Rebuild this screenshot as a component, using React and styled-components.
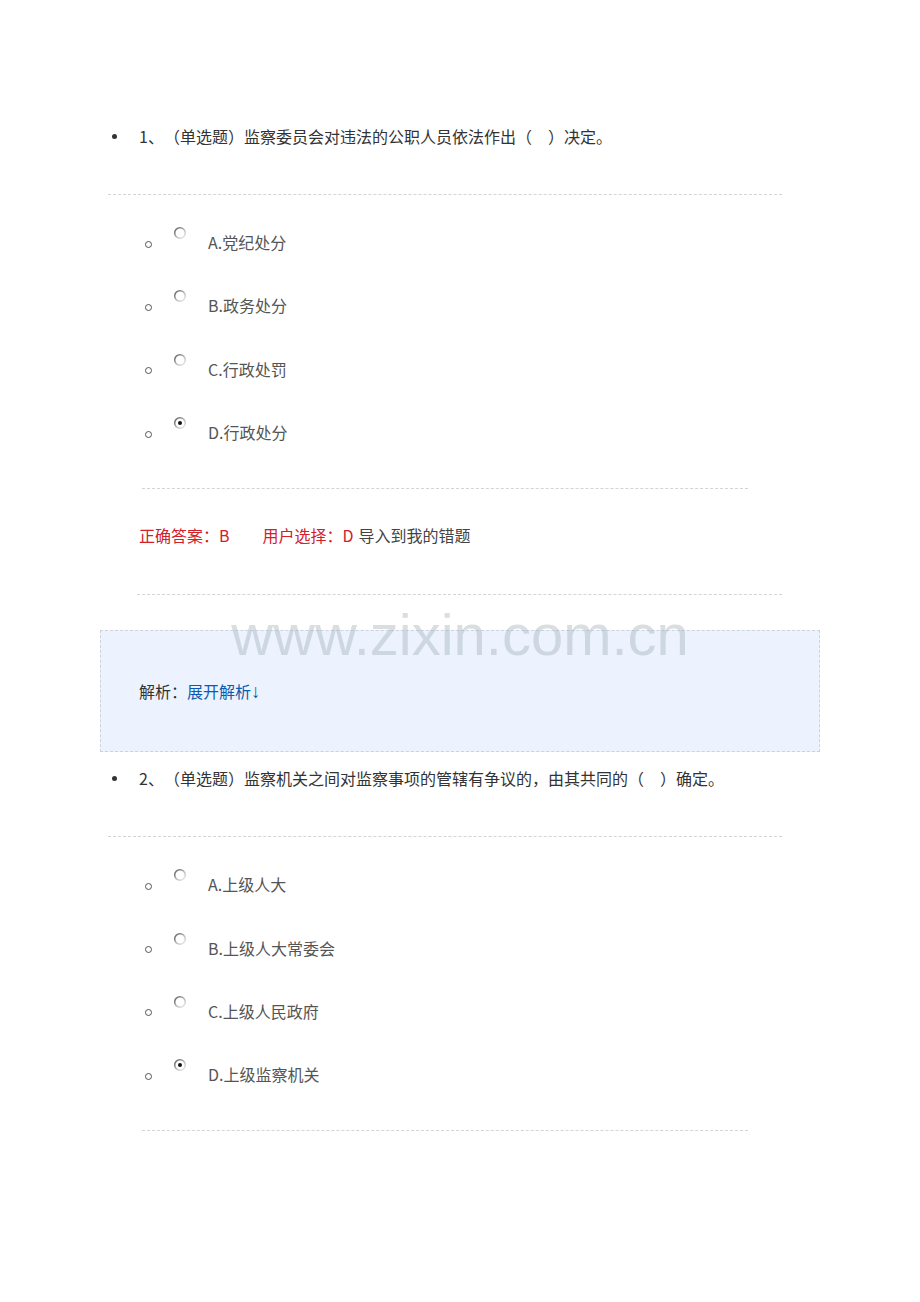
import styled, { createGlobalStyle } from "styled-components";

const GlobalStyle = createGlobalStyle`
  body {
    margin: 0;
    background: #fff;
    font-family: "Noto Sans CJK SC", "Liberation Sans", sans-serif;
    color: #333;
    text-spacing-trim: space-all;
  }
`;

const Page = styled.div`
  width: 920px;
  min-height: 1302px;
  padding-top: 121px;
  position: relative;
  box-sizing: border-box;
`;

const QuestionRow = styled.div`
  display: flex;
  align-items: center;
  height: 30px;
  margin-left: 112px;
  font-size: 16px;
  color: #333;
  white-space: pre;
`;

const Disc = styled.span`
  width: 5px;
  height: 5px;
  border-radius: 50%;
  background: #333;
  margin-right: 22px;
  flex-shrink: 0;
`;

const Divider = styled.div`
  height: 0;
  border-top: 1px dashed #d4d4d4;
  margin-top: ${(p) => p.$top}px;
  margin-left: ${(p) => p.$left}px;
  width: ${(p) => p.$width}px;
`;

const OptionList = styled.div`
  display: flex;
  flex-direction: column;
  gap: 23.4px;
  margin-top: 27px;
  margin-left: 145px;
`;

const OptionRow = styled.div`
  display: flex;
  align-items: center;
  height: 40px;
  font-size: 16px;
  color: #555;
`;

const Ring = styled.span`
  width: 5px;
  height: 5px;
  border: 1px solid #555;
  border-radius: 50%;
  margin-top: 4px;
  margin-right: 21px;
`;

const RadioWrap = styled.span`
  display: flex;
  width: 14px;
  height: 14px;
  margin-top: -18px;
  margin-right: 21px;
`;

const AnswerRow = styled.div`
  display: flex;
  align-items: center;
  height: 30px;
  margin-top: 31px;
  margin-left: 139px;
  font-size: 16px;
`;

const Red = styled.span`
  color: #d0202a;
  margin-right: ${(p) => p.$gap || 0}px;
`;

const Grey = styled.span`
  color: #444;
`;

const AnalysisBox = styled.div`
  margin-top: 35px;
  margin-left: 100px;
  width: 720px;
  box-sizing: border-box;
  border: 1px dashed #cfd3d8;
  background: #ecf3fe;
  padding: 45px 0 44px 38px;
  font-size: 16px;
  line-height: 30px;
  color: #333;
`;

const Link = styled.span`
  color: #0b5cb0;
`;

const Arrow = styled.span`
  font-family: "Liberation Sans", Arial, sans-serif;
  font-size: 19px;
`;

const Spacer = styled.div`
  height: 11px;
`;

const Watermark = styled.div`
  position: absolute;
  top: 600px;
  left: 0;
  width: 920px;
  text-align: center;
  font-family: "Liberation Sans", Arial, sans-serif;
  font-size: 58px;
  line-height: 70px;
  color: rgba(160, 172, 186, 0.4);
  pointer-events: none;
`;

const Radio = ({ checked }) => (
  <RadioWrap>
    <svg width="14" height="14" viewBox="0 0 14 14">
      <defs>
        <linearGradient id="rg" x1="0" y1="0" x2="1" y2="1">
          <stop offset="0" stopColor="#555" />
          <stop offset="0.55" stopColor="#bbb" />
          <stop offset="1" stopColor="#f2f2f2" />
        </linearGradient>
      </defs>
      <circle cx="7" cy="7" r="5.3" fill="#fff" stroke="url(#rg)" strokeWidth="1.6" />
      {checked && <circle cx="7" cy="7" r="2" fill="#111" />}
    </svg>
  </RadioWrap>
);

const Question = ({ num, text, options, checked }) => (
  <>
    <QuestionRow>
      <Disc />
      {num}、（单选题）{text}
    </QuestionRow>
    <Divider $top={43} $left={108} $width={674} />
    <OptionList>
      {options.map((o, i) => (
        <OptionRow key={o}>
          <Ring />
          <Radio checked={i === checked} />
          {o}
        </OptionRow>
      ))}
    </OptionList>
    <Divider $top={36} $left={142} $width={606} />
  </>
);

export default function App() {
  return (
    <Page>
      <GlobalStyle />
      <Question
        num="1"
        text="监察委员会对违法的公职人员依法作出（　）决定。"
        options={["A.党纪处分", "B.政务处分", "C.行政处罚", "D.行政处分"]}
        checked={3}
      />
      <AnswerRow>
        <Red $gap={33}>正确答案：B</Red>
        <Red $gap={5}>用户选择：D</Red>
        <Grey>导入到我的错题</Grey>
      </AnswerRow>
      <Divider $top={44} $left={137} $width={645} />
      <AnalysisBox>
        解析：
        <Link>
          展开解析<Arrow>↓</Arrow>
        </Link>
      </AnalysisBox>
      <Spacer />
      <Question
        num="2"
        text="监察机关之间对监察事项的管辖有争议的，由其共同的（　）确定。"
        options={["A.上级人大", "B.上级人大常委会", "C.上级人民政府", "D.上级监察机关"]}
        checked={3}
      />
      <Watermark>www.zixin.com.cn</Watermark>
    </Page>
  );
}
